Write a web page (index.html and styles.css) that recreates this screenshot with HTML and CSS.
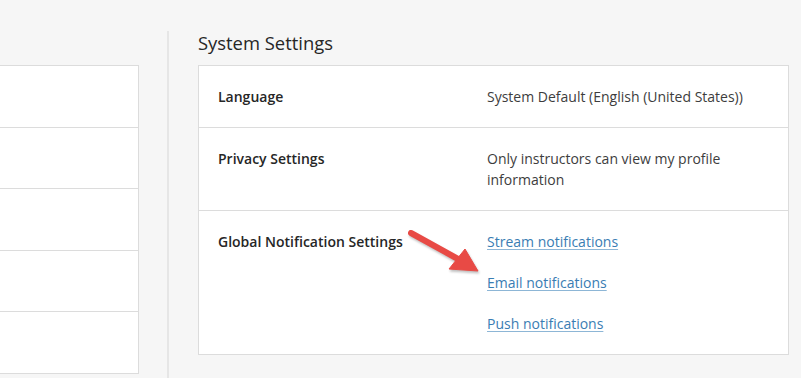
FILE: index.html
```html
<!DOCTYPE html>
<html lang="en">
<head>
  <meta charset="UTF-8" />
  <title>Settings</title>
  <link rel="stylesheet" href="styles.css">
</head>
<body>
  <main class="page">
    <!-- left column: list cut off by the screenshot -->
    <section class="side-list">
      <div class="side-row"></div>
      <div class="side-row"></div>
      <div class="side-row"></div>
      <div class="side-row"></div>
      <div class="side-row"></div>
    </section>

    <div class="divider"></div>

    <section class="settings">
      <h2 class="settings-title">System Settings</h2>
      <div class="settings-box">
        <div class="setting-row">
          <div class="setting-label">Language</div>
          <div class="setting-value">System Default (English (United States))</div>
        </div>
        <div class="setting-row">
          <div class="setting-label">Privacy Settings</div>
          <div class="setting-value">Only instructors can view my profile information</div>
        </div>
        <div class="setting-row">
          <div class="setting-label">Global Notification Settings</div>
          <div class="setting-value links">
            <a href="#">Stream notifications</a>
            <a href="#">Email notifications</a>
            <a href="#">Push notifications</a>
          </div>
        </div>
      </div>
    </section>

    <!-- annotation arrow drawn over the page -->
    <svg class="callout-arrow" width="80" height="52" viewBox="0 0 80 52">
      <line x1="7" y1="7" x2="54" y2="33" stroke="#e84a45" stroke-width="6" stroke-linecap="round" />
      <polygon points="61,23 45,43 74,45" fill="#e84a45" stroke="#e84a45" stroke-width="1" stroke-linejoin="round" />
    </svg>
  </main>
</body>
</html>
```

FILE: styles.css
```css
:root {
  --page-bg: #f6f6f6;
  --panel-bg: #ffffff;
  --line: #dcdcdc;
  --text: #262626;
  --muted: #3d3d3d;
  --link: #3a7db3;
  --font: 'Open Sans', 'Noto Sans', sans-serif;
}

* {
  box-sizing: border-box;
  margin: 0;
  padding: 0;
}

body {
  background: var(--page-bg);
  font-family: var(--font);
  color: var(--text);
  overflow: hidden;
}

.page {
  position: relative;
  display: flex;
  align-items: flex-start;
  height: 378px;
}

/* Left list (only its right edge is visible) */
.side-list {
  width: 139px;
  margin-top: 65px;
  background: var(--panel-bg);
  border-top: 1px solid var(--line);
  border-right: 1px solid var(--line);
}

.side-row {
  height: 61.5px;
  border-bottom: 1px solid var(--line);
}

.divider {
  width: 2px;
  height: 360px;
  margin: 31px 0 0 28px;
  background: #e6e6e6;
}

/* System settings panel */
.settings {
  width: 591px;
  margin: 31px 0 0 29px;
}

.settings-title {
  font-size: 18.4px;
  font-weight: 400;
  line-height: 24px;
  margin-bottom: 10px;
}

.settings-box {
  background: var(--panel-bg);
  border: 1px solid var(--line);
}

.setting-row {
  display: grid;
  grid-template-columns: 269px 1fr;
  padding: 20px 19px;
  font-size: 14px;
  line-height: 21px;
  border-bottom: 1px solid var(--line);
}

.setting-row:last-child {
  border-bottom: none;
}

.setting-label {
  font-weight: 600;
  color: var(--text);
}

.setting-value {
  color: var(--muted);
  padding-right: 20px;
}

.links {
  display: flex;
  flex-direction: column;
  align-items: flex-start;
  gap: 20px;
}

.links a {
  color: var(--link);
  text-decoration: underline;
  text-decoration-color: #8db6d6;
  text-underline-offset: 2px;
}

.callout-arrow {
  position: absolute;
  left: 404px;
  top: 226px;
  filter: drop-shadow(1px 2px 1px rgba(0, 0, 0, 0.25));
}
```
